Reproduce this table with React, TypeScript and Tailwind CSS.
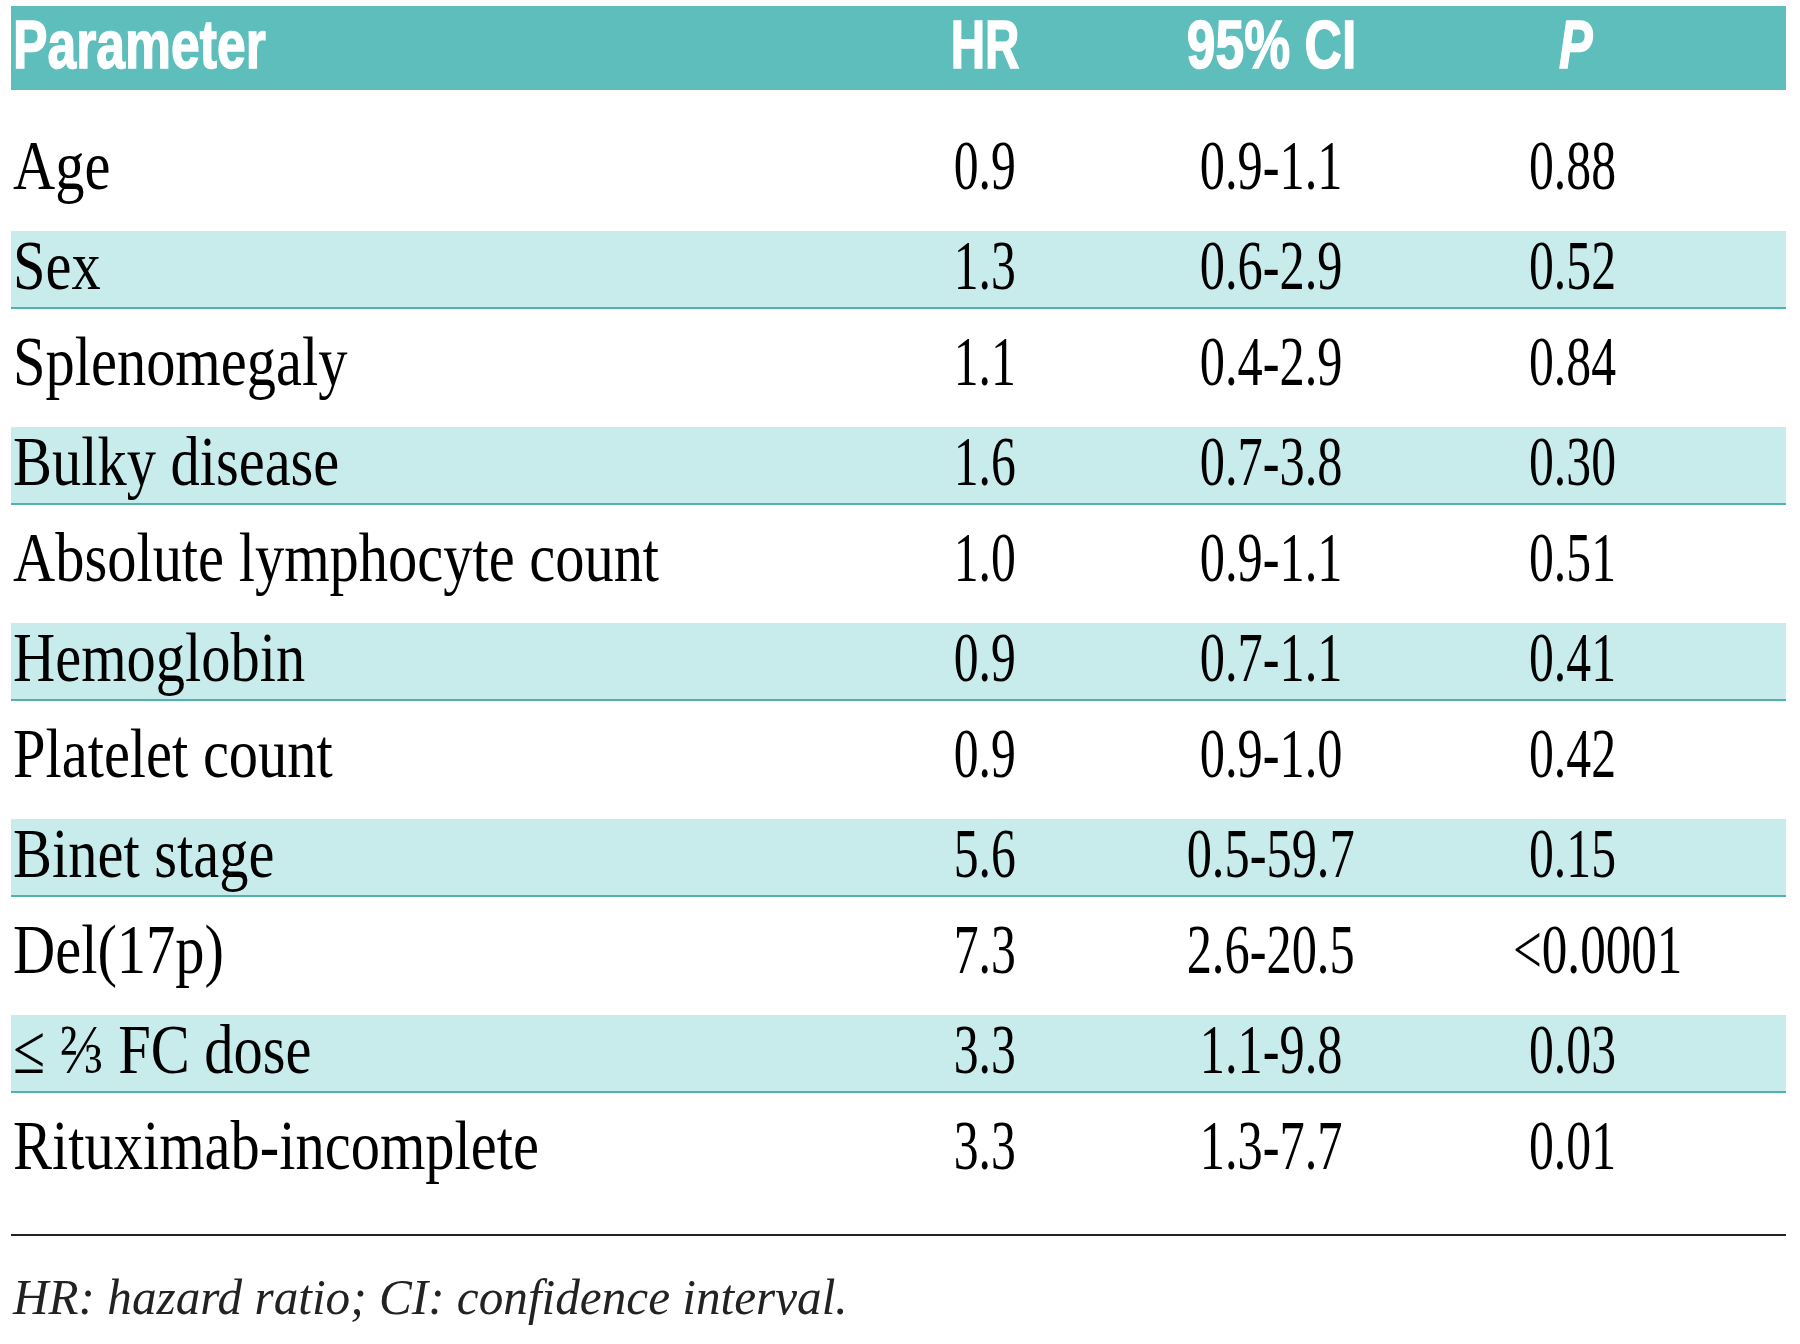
const rows: { name: string; hr: string; ci: string; p: string }[] = [
  { name: 'Age', hr: '0.9', ci: '0.9-1.1', p: '0.88' },
  { name: 'Sex', hr: '1.3', ci: '0.6-2.9', p: '0.52' },
  { name: 'Splenomegaly', hr: '1.1', ci: '0.4-2.9', p: '0.84' },
  { name: 'Bulky disease', hr: '1.6', ci: '0.7-3.8', p: '0.30' },
  { name: 'Absolute lymphocyte count', hr: '1.0', ci: '0.9-1.1', p: '0.51' },
  { name: 'Hemoglobin', hr: '0.9', ci: '0.7-1.1', p: '0.41' },
  { name: 'Platelet count', hr: '0.9', ci: '0.9-1.0', p: '0.42' },
  { name: 'Binet stage', hr: '5.6', ci: '0.5-59.7', p: '0.15' },
  { name: 'Del(17p)', hr: '7.3', ci: '2.6-20.5', p: '<0.0001' },
  { name: '≤ ⅔ FC dose', hr: '3.3', ci: '1.1-9.8', p: '0.03' },
  { name: 'Rituximab-incomplete', hr: '3.3', ci: '1.3-7.7', p: '0.01' },
];

export default function App() {
  return (
    <div className="w-[1800px] h-[1344px] bg-white text-black overflow-hidden">
      <div className="ml-[11px] w-[1775px] pt-[6px]">
        {/* header */}
        <div className="grid grid-cols-[849px_250px_322px_354px] h-[84px] pb-[8px] items-center bg-[#5ebebb] text-white font-['Liberation_Sans',sans-serif] font-bold text-[68px] leading-none [-webkit-text-stroke:1.5px_white]">
          <div className="pl-[2px]">
            <span className="inline-block origin-left scale-x-[0.76]">Parameter</span>
          </div>
          <div className="text-center">
            <span className="inline-block scale-x-[0.7]">HR</span>
          </div>
          <div className="text-center">
            <span className="inline-block scale-x-[0.76]">95% CI</span>
          </div>
          <div className="pl-[127px]">
            <span className="inline-block origin-left scale-x-[0.74] italic">P</span>
          </div>
        </div>

        {/* body */}
        <div className="mt-[23px] font-['Liberation_Serif',serif] text-[70px] leading-none">
          {rows.map((r, i) => {
            const band = i % 2 === 1;
            return (
              <div
                key={r.name}
                className={
                  band
                    ? 'grid grid-cols-[849px_250px_322px_354px] items-center h-[78px] pb-[12px] bg-[#c8ecec] border-b-2 border-[#4fb2b0]'
                    : 'grid grid-cols-[849px_250px_322px_354px] items-center h-[118px] pb-[12px]'
                }
              >
                <div className="pl-[2px] whitespace-nowrap">
                  <span className="inline-block origin-left scale-x-[0.835]">{r.name}</span>
                </div>
                <div className="text-center">
                  <span className="inline-block scale-x-[0.71]">{r.hr}</span>
                </div>
                <div className="text-center whitespace-nowrap">
                  <span className="inline-block scale-x-[0.72]">{r.ci}</span>
                </div>
                <div className="pl-[97px] whitespace-nowrap">
                  <span
                    className={
                      r.p.startsWith('<')
                        ? 'inline-block origin-left scale-x-[0.73] -ml-[16px]'
                        : 'inline-block origin-left scale-x-[0.71]'
                    }
                  >
                    {r.p}
                  </span>
                </div>
              </div>
            );
          })}
        </div>

        {/* footer */}
        <div className="mt-[23px] h-[2px] bg-[#222]" />
        <div className="mt-[36px] pl-[2px] font-['Liberation_Serif',serif] italic text-[51px] leading-none whitespace-nowrap text-[#222]">
          <span className="inline-block origin-left scale-x-[0.965]">HR: hazard ratio; CI: confidence interval.</span>
        </div>
      </div>
    </div>
  );
}
